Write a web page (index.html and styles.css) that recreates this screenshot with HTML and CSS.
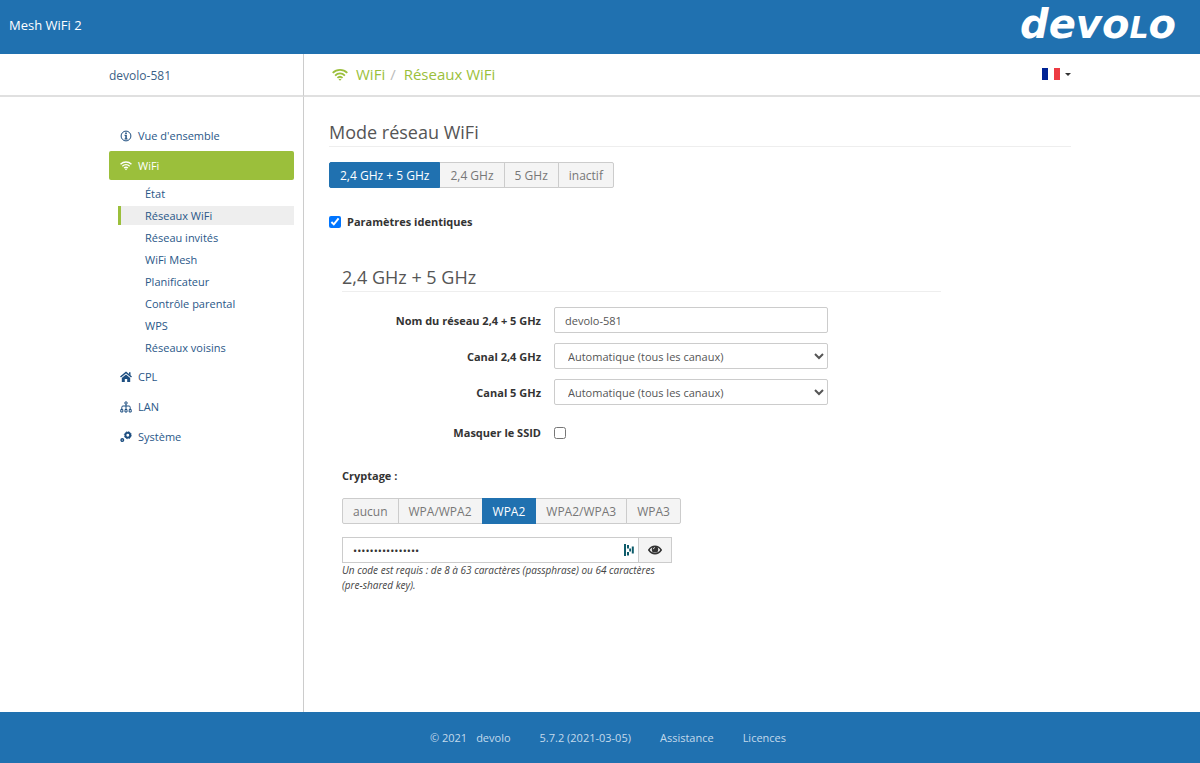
FILE: index.html
```html
<!DOCTYPE html>
<html lang="fr">
<head>
<meta charset="utf-8">
<meta name="viewport" content="width=device-width, initial-scale=1">
<title>Mesh WiFi 2 – Réseaux WiFi</title>
<link rel="stylesheet" href="styles.css">
</head>
<body>
<svg class="sprite" aria-hidden="true">
  <symbol id="wifi" viewBox="0 0 18 14">
    <g fill="none" stroke="currentColor" stroke-width="2">
      <path d="M.8 5.200C5.500 .6 12.500 .6 17.200 5.200"/>
      <path d="M3.500 8.200C6.700 5 11.300 5 14.500 8.200"/>
      <path d="M6.100 10.900C7.900 9.200 10.100 9.200 11.900 10.900"/>
    </g>
    <path fill="currentColor" d="M7.300 12.300Q9 11 10.700 12.300L9 14z"/>
  </symbol>
</svg>

<header class="topbar">
  <span class="product">Mesh WiFi 2</span>
  <span class="logo">devo<span class="logo-cap">L</span>o</span>
</header>

<div class="shell">
  <div class="device"><a href="#">devolo-581</a></div>

  <div class="crumbbar">
    <nav class="crumbs" aria-label="Fil d'Ariane">
      <svg class="crumb-icon" aria-hidden="true"><use href="#wifi"/></svg>
      <a href="#">WiFi</a><span class="slash">/</span><a href="#">Réseaux WiFi</a>
    </nav>
    <button class="lang" type="button" aria-label="Langue : français">
      <svg class="flag" viewBox="0 0 18 12" aria-hidden="true"><path fill="#fff" d="M0 0h18v12H0z"/><path fill="#002395" d="M0 0h6v12H0z"/><path fill="#ed3b43" d="M12 0h6v12h-6z"/></svg>
      <span class="caret"></span>
    </button>
  </div>

  <nav class="side" aria-label="Menu principal">
    <ul class="menu">
      <li><a class="item" href="#">
        <svg class="icon" viewBox="0 0 12 12" aria-hidden="true"><circle cx="6" cy="6" r="4.900" fill="none" stroke="currentColor"/><path fill="currentColor" d="M5.200 2.500h1.600v1.400H5.200zM4.500 4.800h2.300v3.600h.8v1H4.500v-1h.8V5.800h-.8z"/></svg>
        Vue d'ensemble</a></li>
      <li><a class="item active" href="#">
        <svg class="icon" viewBox="0 0 12 12" aria-hidden="true"><use href="#wifi" width="12" height="11"/></svg>
        WiFi</a>
        <ul class="submenu">
          <li><a href="#">État</a></li>
          <li><a class="current" href="#">Réseaux WiFi</a></li>
          <li><a href="#">Réseau invités</a></li>
          <li><a href="#">WiFi Mesh</a></li>
          <li><a href="#">Planificateur</a></li>
          <li><a href="#">Contrôle parental</a></li>
          <li><a href="#">WPS</a></li>
          <li><a href="#">Réseaux voisins</a></li>
        </ul></li>
      <li><a class="item" href="#">
        <svg class="icon" viewBox="0 0 12 12" aria-hidden="true"><path fill="none" stroke="currentColor" stroke-width="1.500" d="M.5 6L6 1.500 11.500 6"/><path fill="currentColor" d="M9 1.300h1.500v3.200L9 3.300zM6 3.600L10.200 7v4H7.200V8H4.800v3h-3V7z"/></svg>
        CPL</a></li>
      <li><a class="item" href="#">
        <svg class="icon" viewBox="0 0 12 12" aria-hidden="true"><g fill="none" stroke="currentColor"><circle cx="6" cy="2" r="1.200"/><path d="M6 3.200V8.500M1.800 8.500V6.300Q1.800 5 3 5H9Q10.200 5 10.200 6.300V8.500"/><path d="M.8 11V8.500H2.800V11zM5 11V8.500H7V11zM9.200 11V8.500H11.200V11z"/></g></svg>
        LAN</a></li>
      <li><a class="item" href="#">
        <svg class="icon" viewBox="0 0 12 12" aria-hidden="true"><g fill="none" stroke="currentColor"><circle cx="7.800" cy="4.200" r="2.400" stroke-width="1.900"/><circle cx="7.800" cy="4.200" r="3.500" stroke-width=".9" stroke-dasharray="1.370 1.380"/><circle cx="2.300" cy="9" r="1.300" stroke-width="1.400"/></g></svg>
        Système</a></li>
    </ul>
  </nav>

  <main class="content">
    <h1 class="title">Mode réseau WiFi</h1>
    <div class="segmented" role="group" aria-label="Mode réseau WiFi">
      <button type="button" class="on" aria-pressed="true">2,4 GHz + 5 GHz</button>
      <button type="button">2,4 GHz</button>
      <button type="button">5 GHz</button>
      <button type="button">inactif</button>
    </div>
    <label class="check"><input type="checkbox" checked> Paramètres identiques</label>

    <form class="panel">
      <h2 class="title">2,4 GHz + 5 GHz</h2>
      <div class="fields">
        <label for="ssid">Nom du réseau 2,4 + 5 GHz</label>
        <input class="control" id="ssid" type="text" value="devolo-581">
        <label for="ch24">Canal 2,4 GHz</label>
        <select class="control" id="ch24"><option>Automatique (tous les canaux)</option></select>
        <label for="ch5">Canal 5 GHz</label>
        <select class="control" id="ch5"><option>Automatique (tous les canaux)</option></select>
      </div>
      <div class="fields hide-row">
        <label for="hide">Masquer le SSID</label>
        <input id="hide" type="checkbox">
      </div>

      <h3 class="subtitle" id="crypt">Cryptage :</h3>
      <div class="segmented" role="group" aria-labelledby="crypt">
        <button type="button">aucun</button>
        <button type="button">WPA/WPA2</button>
        <button type="button" class="on" aria-pressed="true">WPA2</button>
        <button type="button">WPA2/WPA3</button>
        <button type="button">WPA3</button>
      </div>
      <div class="secret">
        <div class="secret-field">
          <input type="password" value="abcdefghijklmnop" aria-label="Code" aria-describedby="hint">
          <svg class="vault" viewBox="0 0 10 12" aria-hidden="true"><path fill="#0e5c6b" d="M0 0h2v12H0zM3 1h2v3.500H3zM3 8h2v3.500H3zM5.200 4.500h1.800v3H5.200zM7.800 2.500h2v7H7.800z"/></svg>
        </div>
        <button class="reveal" type="button" aria-label="Afficher le code">
          <svg viewBox="0 0 14 10" aria-hidden="true"><path fill="none" stroke="currentColor" stroke-width="1.500" d="M.8 5C4 .1 10 .1 13.200 5C10 9.900 4 9.900 .8 5z"/><circle cx="7" cy="4.400" r="3.200" fill="currentColor"/><path fill="none" stroke="#f4f4f4" stroke-width=".8" d="M5.300 4.200Q5.400 2.600 7 2.500"/></svg>
        </button>
      </div>
      <p class="hint" id="hint">Un code est requis : de 8 à 63 caractères (passphrase) ou 64 caractères (pre-shared key).</p>
    </form>
  </main>
</div>

<footer class="footer">
  <span class="copy">© 2021 <a href="#">devolo</a></span>
  <span>5.7.2 (2021-03-05)</span>
  <a href="#">Assistance</a>
  <a href="#">Licences</a>
</footer>
</body>
</html>
```

FILE: styles.css
```css
* { box-sizing: border-box; }

body {
  margin: 0;
  min-height: 100vh;
  display: flex;
  flex-direction: column;
  background: #fff;
  color: #333;
  font-family: "Open Sans", "Liberation Sans", sans-serif;
  font-size: 11px;
  line-height: 15px;
}

a { color: inherit; text-decoration: none; }
ul { list-style: none; margin: 0; padding: 0; }
button, input, select { font: inherit; color: inherit; }
input[type="checkbox"] { width: 12px; height: 12px; margin: 0; }
.sprite { display: none; }

.topbar {
  display: flex;
  align-items: center;
  justify-content: space-between;
  height: 54px;
  padding: 0 24px 3px 9px;
  background: #2071b0;
  color: #fff;
}
.product { font-size: 13px; }
.logo { font: italic bold 40px/44px "DejaVu Sans", sans-serif; }
.logo-cap { font-size: 30px; }

.shell {
  flex: 1;
  display: grid;
  grid-template-columns: calc(50% - 296px) 1fr;
  grid-template-rows: 43px 1fr;
}

.device, .crumbbar { border-bottom: 2px solid #e0e0e0; }
.device, .side {
  padding-left: calc(100% - 195px);
  padding-right: 9px;
  border-right: 1px solid #ccc;
}
.device { padding-top: 14px; font-size: 12px; color: #3b5f86; }

.crumbbar {
  display: flex;
  align-items: center;
  justify-content: space-between;
  padding: 0 calc(50vw - 471px) 1px 28px;
}
.crumbs { display: flex; align-items: center; font-size: 15px; color: #9bbf3b; }
.crumb-icon { width: 16px; height: 13px; margin-right: 8px; }
.slash { margin: 0 8px 0 5px; color: #bbb; }
.lang {
  display: flex;
  align-items: center;
  gap: 5px;
  padding: 0;
  border: 0;
  background: none;
}
.flag { width: 18px; height: 12px; }
.caret { border: 3px solid transparent; border-top-color: #333; border-bottom: 0; }

.side { padding-top: 24px; color: #2a5788; }
.menu { display: flex; flex-direction: column; gap: 1px; }
.item {
  display: flex;
  align-items: center;
  gap: 6px;
  height: 29px;
  padding-left: 11px;
  border-radius: 2px;
}
.item.active { background: #9bbf3b; color: #fff; }
.icon { width: 12px; height: 12px; color: #1d4e80; }
.active .icon { color: #fff; }
.submenu {
  display: flex;
  flex-direction: column;
  gap: 3px;
  padding: 4px 0;
}
.submenu a {
  display: block;
  margin-left: 9px;
  padding-left: 24px;
  border-left: 3px solid transparent;
  line-height: 19px;
}
.submenu .current { background: #eee; border-left-color: #9bbf3b; }

.content { padding: 24px calc(50vw - 471px) 40px 25px; }
.title {
  margin: 0;
  padding-bottom: 3px;
  border-bottom: 1px solid #eee;
  font-size: 18px;
  font-weight: 400;
  line-height: 22px;
  color: #555;
}

.segmented { display: flex; margin-top: 15px; }
.segmented button {
  height: 26px;
  margin-left: -1px;
  padding: 0 10px;
  border: 1px solid #ccc;
  background: #f4f4f4;
  color: #777;
  font-size: 12px;
}
.segmented button:first-child { margin-left: 0; border-radius: 2px 0 0 2px; }
.segmented button:last-child { border-radius: 0 2px 2px 0; }
.segmented .on { position: relative; background: #2071b0; border-color: #2071b0; color: #fff; }

.check {
  display: flex;
  align-items: center;
  gap: 6px;
  margin-top: 26px;
  font-weight: 700;
}

.panel { max-width: 612px; margin-top: 37px; padding-left: 13px; }
.fields {
  display: grid;
  grid-template-columns: 199px 274px;
  align-items: center;
  gap: 10px 13px;
  margin-top: 15px;
}
.fields label { text-align: right; font-weight: 700; }
.control {
  width: 100%;
  height: 26px;
  padding: 0 10px;
  border: 1px solid #ccc;
  border-radius: 2px;
  background: #fff;
  color: #555;
}
select.control { padding: 0 0 0 9px; }
.hide-row { margin-top: 20px; }

.subtitle { margin: 28px 0 0; font-size: 11px; font-weight: 700; line-height: 15px; }
.secret { display: flex; margin-top: 13px; }
.secret-field {
  display: flex;
  align-items: center;
  width: 297px;
  height: 26px;
  padding: 0 4px 0 10px;
  border: 1px solid #ccc;
}
.secret-field input { flex: 1; min-width: 0; padding: 0; border: 0; outline: 0; background: none; }
.vault { width: 10px; height: 12px; }
.reveal {
  display: flex;
  align-items: center;
  justify-content: center;
  width: 34px;
  margin-left: -1px;
  padding: 0;
  border: 1px solid #ccc;
  background: #f4f4f4;
}
.reveal svg { width: 14px; height: 10px; }
.hint { max-width: 330px; margin: 0; font-size: 10px; font-style: italic; color: #444; }

.footer {
  display: flex;
  align-items: center;
  justify-content: center;
  gap: 29px;
  height: 51px;
  padding-left: 16px;
  background: #2071b0;
  color: #c3daec;
}
.copy { display: flex; gap: 9px; }
```
